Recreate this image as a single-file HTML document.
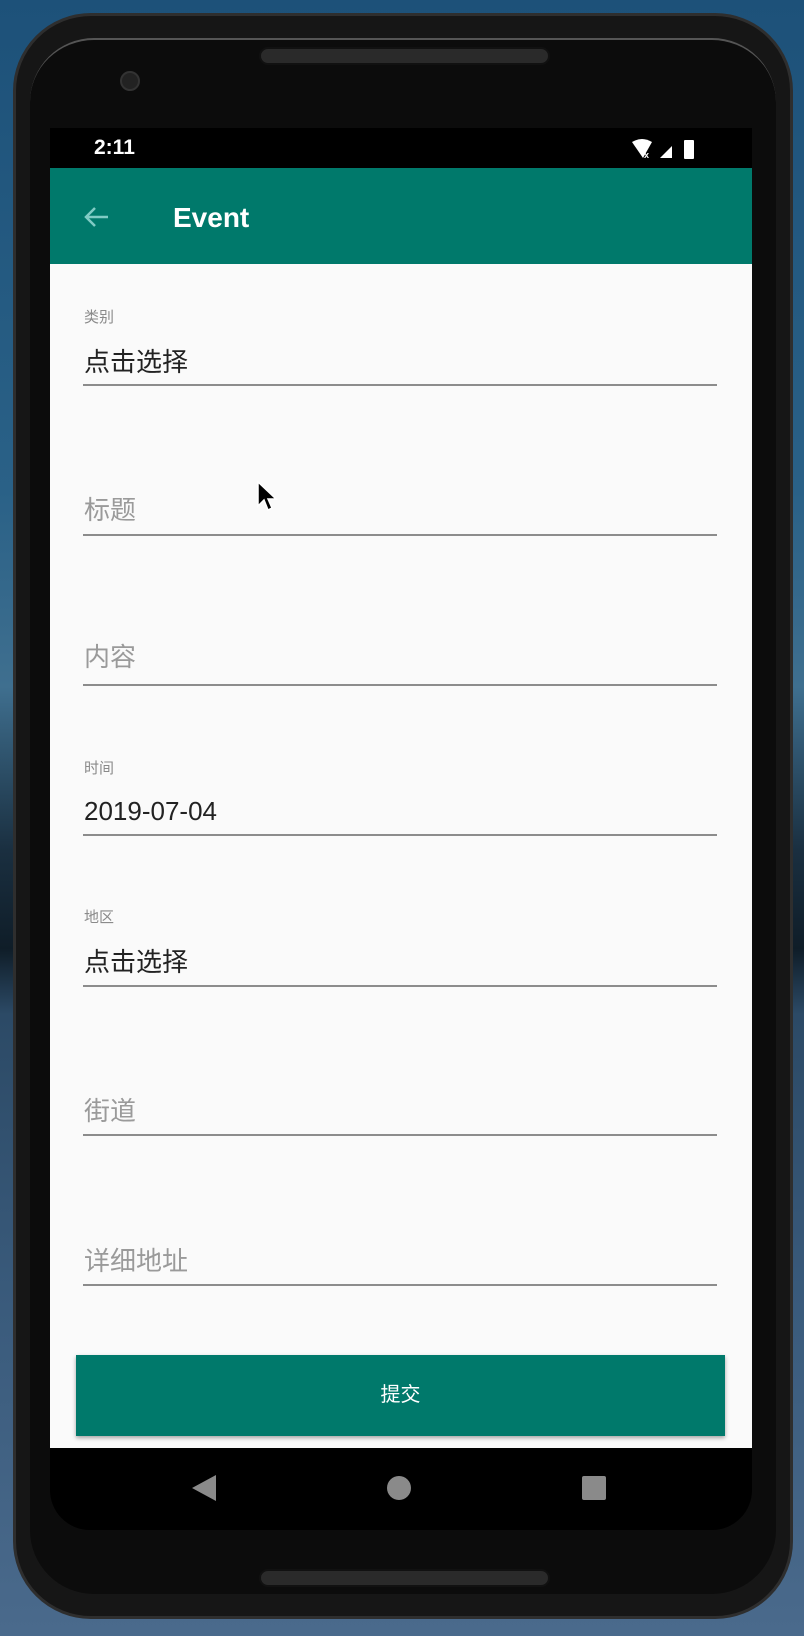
<!DOCTYPE html>
<html><head><meta charset="utf-8"><style>
*{margin:0;padding:0;box-sizing:border-box}
body{width:804px;height:1636px;overflow:hidden;position:relative;font-family:"Liberation Sans","Noto Sans CJK SC",sans-serif;
background:linear-gradient(180deg,#1d5179 0%,#2a6187 30%,#3f6f8f 42%,#1a2f40 52%,#0f1d28 58%,#2c4a66 62%,#3a5b7c 80%,#4a6a8c 100%);}
.phone{position:absolute;left:13px;top:13px;width:780px;height:1606px;background:#161616;border-radius:78px;border:3px solid #2e2e2e;}
.inner{position:absolute;left:14px;top:22px;width:746px;height:1556px;border-radius:64px;background:#0c0c0c;border-top:2px solid #555}
.spk{position:absolute;left:259px;width:291px;height:18px;border-radius:9px;background:#2a2a2a;border:2px solid #111}
.cam{position:absolute;left:120px;top:71px;width:20px;height:20px;border-radius:50%;background:#222;border:2px solid #333}
.screen{position:absolute;left:50px;top:128px;width:702px;height:1402px;background:#000;border-radius:0 0 40px 40px;overflow:hidden}
.status{height:40px;color:#fff;font-size:21px;font-weight:bold}
.tb{position:absolute;top:40px;left:0;width:702px;height:96px;background:#00796b}
.content{position:absolute;top:136px;left:0;width:702px;height:1184px;background:#fafafa}
.lbl{position:absolute;left:34px;font-size:15px;line-height:18px;color:#8a8a8a}
.val{position:absolute;left:34px;font-size:26px;line-height:30px;color:#222}
.hint{position:absolute;left:34px;font-size:26px;line-height:30px;color:#9a9a9a}
.ln{position:absolute;left:33px;width:634px;height:2px;background:#8c8c8c}
.btn{position:absolute;left:26px;top:1091px;width:649px;height:81px;background:#00796b;box-shadow:0 2px 4px rgba(0,0,0,.35);color:#fff;font-size:20px;text-align:center;line-height:81px}
</style></head><body>
<div class="phone"><div class="inner"></div></div>
<div class="spk" style="top:47px"></div>
<div class="spk" style="top:1569px"></div>
<div class="cam"></div>
<div class="screen">
 <div class="status"><span style="position:absolute;left:44px;top:8px">2:11</span>
  <svg style="position:absolute;left:580px;top:10px" width="80" height="24"><path d="M2 4 Q12 -2 22 4 L13 20 Z" fill="#fff"/><text x="14" y="20" font-size="9" fill="#fff" font-family="Liberation Sans">x</text><path d="M30 20 L42 8 L42 20Z" fill="#fff"/><rect x="54" y="2" width="10" height="19" rx="1" fill="#fff"/></svg>
 </div>
 <div class="tb">
  <svg style="position:absolute;left:32px;top:37px" width="28" height="24"><path d="M26 12H4 M13 3L4 12L13 21" stroke="#80cbc4" stroke-width="2.5" fill="none"/></svg>
  <div style="position:absolute;left:123px;top:34px;color:#fff;font-size:28px;font-weight:bold">Event</div>
 </div>
 <div class="content">
  <div class="lbl" style="top:45px">类别</div>
  <div class="val" style="top:83px">点击选择</div>
  <div class="ln" style="top:120px"></div>
  <div class="hint" style="top:231px">标题</div>
  <div class="ln" style="top:270px"></div>
  <div class="hint" style="top:378px">内容</div>
  <div class="ln" style="top:420px"></div>
  <div class="lbl" style="top:496px">时间</div>
  <div class="val" style="top:532px">2019-07-04</div>
  <div class="ln" style="top:570px"></div>
  <div class="lbl" style="top:645px">地区</div>
  <div class="val" style="top:683px">点击选择</div>
  <div class="ln" style="top:721px"></div>
  <div class="hint" style="top:832px">街道</div>
  <div class="ln" style="top:870px"></div>
  <div class="hint" style="top:982px">详细地址</div>
  <div class="ln" style="top:1020px"></div>
  <div class="btn">提交</div>
  <svg style="position:absolute;left:206px;top:216px" width="22" height="34"><path d="M2 2 L2 26 L8 20 L12 30 L16 28 L12 19 L20 19 Z" fill="#000" stroke="#fff" stroke-width="1.5"/></svg>
 </div>
 <svg style="position:absolute;left:0;top:1320px" width="702" height="82">
  <path d="M166 27 L142 40 L166 53Z" fill="#8a8a8a"/>
  <circle cx="349" cy="40" r="12" fill="#8a8a8a"/>
  <rect x="532" y="28" width="24" height="24" rx="2" fill="#8a8a8a"/>
 </svg>
</div>
</body></html>
